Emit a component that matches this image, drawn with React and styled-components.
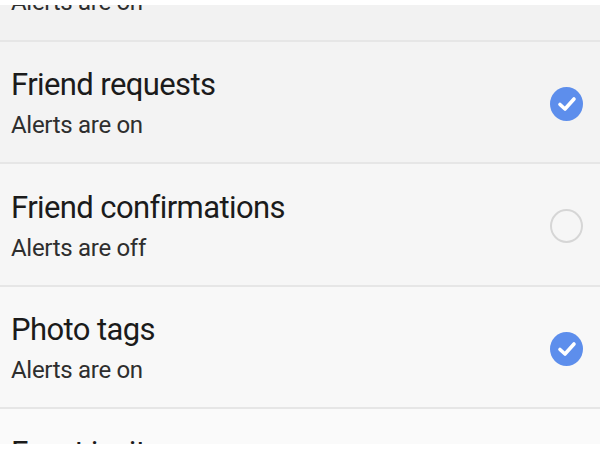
import styled, { createGlobalStyle } from "styled-components";

const GlobalStyle = createGlobalStyle`
  html, body {
    margin: 0;
    padding: 0;
    background: #ffffff;
  }
  * {
    box-sizing: border-box;
  }
`;

const Page = styled.div`
  width: 600px;
  height: 450px;
  padding-top: 5px;
  background: #ffffff;
  overflow: hidden;
  font-family: Roboto, "Noto Sans", "Liberation Sans", sans-serif;
`;

const Viewport = styled.div`
  height: 439px;
  overflow: hidden;
`;

const List = styled.div`
  display: flex;
  flex-direction: column;
  margin-top: -88px;
`;

const Row = styled.div`
  display: flex;
  align-items: center;
  justify-content: space-between;
  height: 122.5px;
  flex-shrink: 0;
  padding: 4px 17px 0 11px;
  border-top: 2px solid #e6e6e6;
  background: ${(props) => props.bg};

  &:first-child {
    border-top: none;
  }
`;

const Texts = styled.div`
  display: flex;
  flex-direction: column;
  gap: 7px;
`;

const Title = styled.div`
  font-size: 31px;
  line-height: 36px;
  letter-spacing: -0.6px;
  color: #1b1b1b;
`;

const Subtitle = styled.div`
  font-size: 24px;
  line-height: 30px;
  letter-spacing: -0.3px;
  color: #2e2e2e;
`;

const Toggle = styled.div`
  width: 33px;
  height: 34px;
  border-radius: 50%;
  display: flex;
  align-items: center;
  justify-content: center;
  flex-shrink: 0;
  background: ${(props) => (props.on ? "#5d8eec" : "transparent")};
  border: ${(props) => (props.on ? "none" : "2px solid #d6d6d6")};
`;

const Check = () => (
  <svg width="22" height="22" viewBox="0 0 22 22">
    <path
      d="M4 11.5 L9 16 L18 6"
      fill="none"
      stroke="#ffffff"
      strokeWidth="3.6"
      strokeLinecap="round"
      strokeLinejoin="round"
    />
  </svg>
);

const items = [
  { title: "Comments", on: true, bg: "#f2f2f2" },
  { title: "Friend requests", on: true, bg: "#f3f3f3" },
  { title: "Friend confirmations", on: false, bg: "#f6f6f6" },
  { title: "Photo tags", on: true, bg: "#f8f8f8" },
  { title: "Event invites", on: true, bg: "#fafafa" },
];

export default function App() {
  return (
    <>
      <GlobalStyle />
      <Page>
        <Viewport>
          <List>
            {items.map((item) => (
              <Row key={item.title} bg={item.bg}>
                <Texts>
                  <Title>{item.title}</Title>
                  <Subtitle>{item.on ? "Alerts are on" : "Alerts are off"}</Subtitle>
                </Texts>
                <Toggle on={item.on}>{item.on && <Check />}</Toggle>
              </Row>
            ))}
          </List>
        </Viewport>
      </Page>
    </>
  );
}
